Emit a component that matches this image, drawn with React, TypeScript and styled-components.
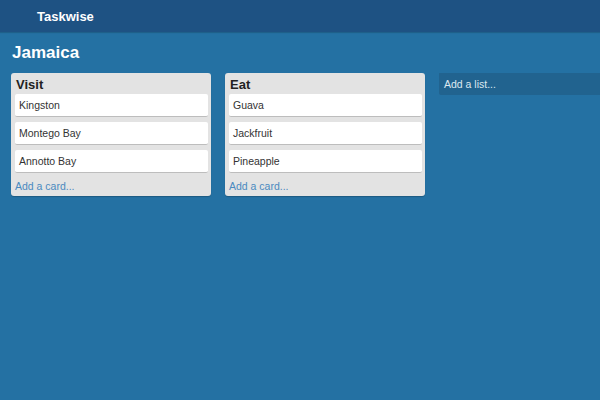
import React from "react";
import styled, { createGlobalStyle } from "styled-components";

const Global = createGlobalStyle`
  html, body { margin: 0; padding: 0; }
  body {
    background: #2471a3;
    font-family: "Liberation Sans", Arial, sans-serif;
    width: 600px;
    height: 400px;
    overflow: hidden;
  }
`;

const Header = styled.header`
  height: 32px;
  background: #1e5283;
  box-shadow: 0 1px 1px rgba(0,0,0,0.15);
  display: flex;
  align-items: center;
  padding-left: 37px;
  color: #fff;
  font-weight: bold;
  font-size: 13px;
`;

const Board = styled.main`
  padding: 11px 0 0 11px;
  overflow: hidden;
`;

const BoardTitle = styled.h1`
  margin: 0 0 0 1px;
  color: #fff;
  font-size: 17px;
  font-weight: bold;
  line-height: 20px;
  height: 30px;
`;

const Lists = styled.div`
  display: flex;
  align-items: flex-start;
  gap: 14px;
  overflow: hidden;
  padding-bottom: 2px;
`;

const List = styled.section`
  width: 200px;
  flex-shrink: 0;
  box-sizing: border-box;
  background: #e3e3e3;
  border-radius: 3px;
  padding: 3px 3px 3px 4px;
  display: flex;
  flex-direction: column;
  box-shadow: 0 1px 1px rgba(0,0,0,0.2);
`;

const ListTitle = styled.h2`
  margin: 0 0 0 1px;
  font-size: 13px;
  font-weight: bold;
  color: #222;
  line-height: 18px;
`;

const Card = styled.div`
  background: #fff;
  height: 22px;
  border-radius: 2px;
  border-bottom: 1px solid #bdbdbd;
  margin-top: 5px;
  display: flex;
  align-items: center;
  padding-left: 4px;
  font-size: 10.5px;
  color: #333;
  &:first-of-type { margin-top: 0; }
`;

const Cards = styled.div`
  display: flex;
  flex-direction: column;
`;

const AddCard = styled.div`
  font-size: 10.5px;
  color: #4a8ac0;
  padding: 6px 0 0 0;
  line-height: 14px;
`;

const AddList = styled.div`
  width: 200px;
  height: 23px;
  margin-top: -1px;
  background: #21638f;
  border-radius: 2px;
  display: flex;
  align-items: center;
  padding-left: 5px;
  color: #dde8f0;
  font-size: 10.5px;
  flex-shrink: 0;
`;

const data = [
  { title: "Visit", cards: ["Kingston", "Montego Bay", "Annotto Bay"] },
  { title: "Eat", cards: ["Guava", "Jackfruit", "Pineapple"] },
];

export default function App() {
  return (
    <>
      <Global />
      <Header>Taskwise</Header>
      <Board>
        <BoardTitle>Jamaica</BoardTitle>
        <Lists>
          {data.map((l) => (
            <List key={l.title}>
              <ListTitle>{l.title}</ListTitle>
              <Cards>
                {l.cards.map((c) => (
                  <Card key={c}>{c}</Card>
                ))}
              </Cards>
              <AddCard>Add a card...</AddCard>
            </List>
          ))}
          <AddList>Add a list...</AddList>
        </Lists>
      </Board>
    </>
  );
}
